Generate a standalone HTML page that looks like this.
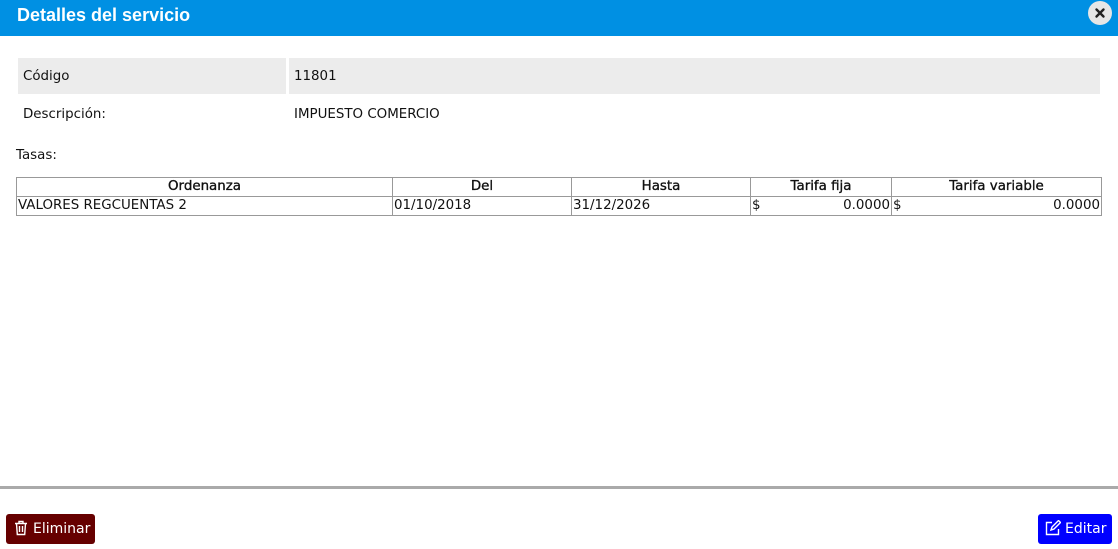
<!DOCTYPE html>
<html><head><meta charset="utf-8"><style>
body{margin:0;width:1118px;height:549px;background:#fff;font-family:"DejaVu Sans","Liberation Sans",sans-serif;font-size:13.4px;color:#111;position:relative;overflow:hidden}
.hdr{position:absolute;left:0;top:0;width:1118px;height:36px;background:#0090e3}
.hdr .t{position:absolute;left:17px;top:5px;color:#fff;font:bold 18px "Liberation Sans",sans-serif}
.x{position:absolute;left:1088px;top:1px;width:24px;height:24px;border-radius:50%;background:#e6e6e6}
.c{position:absolute;box-sizing:border-box;padding-left:5px;line-height:37px}
table{position:absolute;left:16px;top:177px;width:1086px;border-collapse:collapse}
td,th{border:1px solid #999;height:18px;padding:0 1px;line-height:18px;font-size:13.4px}
th{font-weight:500;text-align:center;-webkit-text-stroke:0.35px #111}
.line{position:absolute;left:0;top:486px;width:1118px;height:3px;background:#aaa}
.btn{position:absolute;top:514px;height:30px;border-radius:3px;color:#fff;line-height:31px;font-size:14px;box-sizing:border-box}
</style></head><body>
<div class="hdr"><div class="t">Detalles del servicio</div><div class="x"><svg width="24" height="24" viewBox="0 0 24 24"><path d="M8.5 8.5l7 7M15.5 8.5l-7 7" stroke="#222" stroke-width="2.4" stroke-linecap="round"/></svg></div></div>
<div class="c" style="left:18px;top:58px;width:268px;height:36px;background:#ececec">Código</div>
<div class="c" style="left:289px;top:58px;width:811px;height:36px;background:#ececec">11801</div>
<div class="c" style="left:18px;top:96px;width:268px;height:36px">Descripción:</div>
<div class="c" style="left:289px;top:96px;width:811px;height:36px">IMPUESTO COMERCIO</div>
<div style="position:absolute;left:16px;top:148px">Tasas:</div>
<table>
<tr><th style="width:373px">Ordenanza</th><th style="width:176px">Del</th><th style="width:176px">Hasta</th><th style="width:138px">Tarifa fija</th><th>Tarifa variable</th></tr>
<tr><td>VALORES REGCUENTAS 2</td><td>01/10/2018</td><td>31/12/2026</td><td>$<span style="float:right">0.0000</span></td><td>$<span style="float:right">0.0000</span></td></tr>
</table>
<div class="line"></div>
<div class="btn" style="left:6px;width:89px;background:#660000;padding-left:8px">
<svg width="14" height="16" viewBox="0 0 14 16" style="vertical-align:-3px;margin-right:5px" fill="none" stroke="#fff" stroke-width="1.4"><path d="M1 3.5h12M5 3.5V1.5h4v2M2.5 3.5l.8 11h7.4l.8-11M5.5 6v6M8.5 6v6"/></svg>Eliminar</div>
<div class="btn" style="left:1038px;width:74px;background:#0000ff;padding-left:7px">
<svg width="16" height="16" viewBox="0 0 16 16" style="vertical-align:-3px;margin-right:4px" fill="none" stroke="#fff" stroke-width="1.4"><path d="M7 2.5H1.5v12h12V9M6 10l1-3 6.5-6.5 2 2L9 9z"/></svg>Editar</div>
</body></html>
